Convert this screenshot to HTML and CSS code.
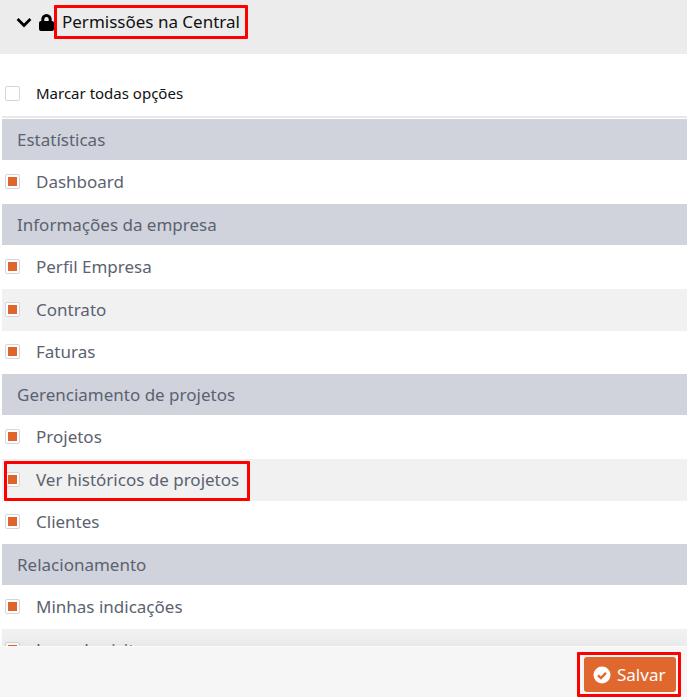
FILE: index.html
```html
<!DOCTYPE html>
<html lang="pt-BR">
<head>
  <meta charset="UTF-8">
  <title>Permissões na Central</title>
  <link rel="stylesheet" href="styles.css">
</head>
<body>
  <div class="header">
    <svg class="chevron" viewBox="0 0 16 11" width="16" height="11"><path d="M1.600 2 8 8.400 14.400 2" fill="none" stroke="#000" stroke-width="2.800"/></svg>
    <svg class="lock" viewBox="0 0 15 17" width="15" height="17"><path d="M2.300 7V5.200a5.200 5.200 0 0 1 10.400 0V7h.3a2 2 0 0 1 2 2v6a2 2 0 0 1-2 2H2a2 2 0 0 1-2-2V9a2 2 0 0 1 2-2zm3 0h4.400V5.200a2.200 2.200 0 0 0-4.400 0z" fill="#000"/></svg>
    <span class="title mark">Permissões na Central</span>
  </div>

  <div class="select-all">
    <span class="check"></span>
    <span>Marcar todas opções</span>
  </div>

  <div class="list">
    <div class="group">Estatísticas</div>
    <div class="row"><span class="check on"></span><span>Dashboard</span></div>

    <div class="group">Informações da empresa</div>
    <div class="row"><span class="check on"></span><span>Perfil Empresa</span></div>
    <div class="row alt"><span class="check on"></span><span>Contrato</span></div>
    <div class="row"><span class="check on"></span><span>Faturas</span></div>

    <div class="group">Gerenciamento de projetos</div>
    <div class="row"><span class="check on"></span><span>Projetos</span></div>
    <div class="row alt">
      <span class="check on"></span><span>Ver históricos de projetos</span>
      <div class="mark row-mark"></div>
    </div>
    <div class="row"><span class="check on"></span><span>Clientes</span></div>

    <div class="group">Relacionamento</div>
    <div class="row"><span class="check on"></span><span>Minhas indicações</span></div>
    <div class="row alt"><span class="check on"></span><span>Logs de visitas</span></div>
  </div>

  <div class="footer">
    <div class="save-mark">
      <button class="save">
        <svg viewBox="0 0 18 18" width="18" height="18"><circle cx="9" cy="9" r="8.500" fill="#fff"/><path d="M5 9.300 7.900 12.100 13 6.900" fill="none" stroke="#e06a2c" stroke-width="2.400"/></svg>
        Salvar
      </button>
    </div>
  </div>
</body>
</html>
```

FILE: styles.css
```css
* {
  margin: 0;
  padding: 0;
  box-sizing: border-box;
  font-family: "Noto Sans", sans-serif;
}

html, body {
  height: 100%;
  overflow: hidden;
}

body {
  background-color: #fff;
  color: #5b6270;
  font-size: 17px;
}

.header {
  display: flex;
  align-items: center;
  height: 54px;
  padding: 0 0 10px 16px;
  background-color: #ececec;
  color: #111;
}

.chevron {
  margin-right: 7px;
}

.lock {
  margin-right: 8px;
}

.mark {
  border: 3px solid #f00;
  border-radius: 1px;
}

.title {
  margin-left: -8px;
  padding: 0 5px 0 5px;
  height: 34px;
  font-size: 17px;
  line-height: 27px;
}

.select-all {
  display: flex;
  align-items: center;
  height: 64px;
  padding: 16px 0 0 3px;
  margin-left: 2px;
  border-bottom: 2px solid #e8e8ec;
  color: #111;
  font-size: 15px;
}

.check {
  flex: none;
  display: flex;
  align-items: center;
  justify-content: center;
  width: 15px;
  height: 15px;
  margin-right: 16px;
  background: #fff;
  border: 1px solid #d4d6dc;
  border-radius: 2px;
}

.check.on::after {
  content: "";
  width: 9px;
  height: 9px;
  background-color: #e0652b;
}

.list {
  margin-left: 2px;
  margin-top: 0.500px;
}

.group {
  display: flex;
  align-items: center;
  height: 42.500px;
  padding-left: 15px;
  background-color: #d0d3dc;
  border-bottom: 1.500px solid #fff;
}

.row {
  position: relative;
  display: flex;
  align-items: center;
  height: 42.500px;
  padding-left: 3px;
  padding-bottom: 1px;
}

.row.alt {
  background-color: #f1f1f1;
}

.row-mark {
  position: absolute;
  left: 2px;
  top: 2px;
  width: 246px;
  height: 40px;
}

.footer {
  position: fixed;
  left: 0;
  right: 0;
  bottom: 0;
  display: flex;
  justify-content: flex-end;
  height: 51px;
  background-color: #f6f6f6;
  border-top: 1px solid #fcfcfc;
  box-shadow: 0 -4px 14px rgba(0, 0, 0, 0.05);
}

.save-mark {
  margin-top: 5px;
  margin-right: 6px;
  padding: 2px 2px 2px 4px;
  height: 45px;
  border: 3px solid #f00;
  border-radius: 1px;
}

.save {
  display: flex;
  align-items: center;
  gap: 6px;
  width: 92px;
  height: 35px;
  padding-left: 9px;
  background-color: #e0682e;
  color: #fff;
  border: none;
  border-radius: 3px;
  font-size: 17px;
}
```
